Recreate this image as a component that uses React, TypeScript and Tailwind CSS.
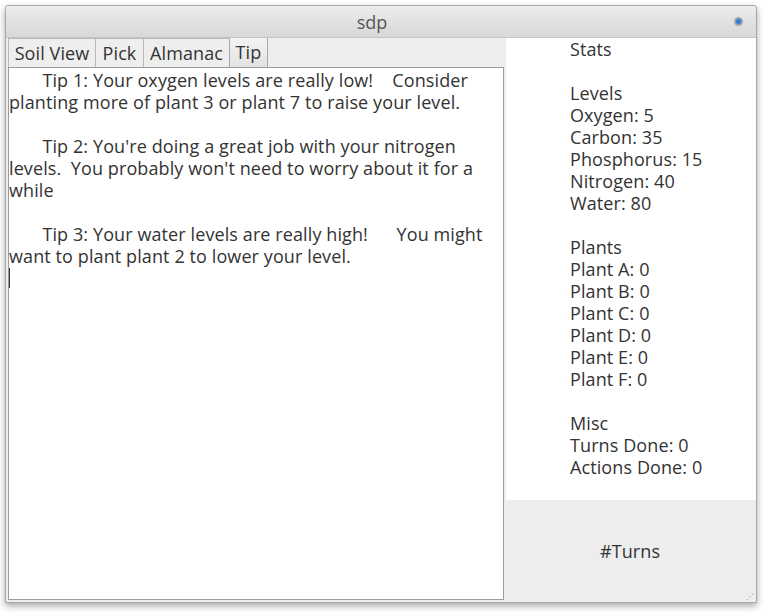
import React from "react";

const FONT = "font-['Open_Sans','Liberation_Sans',sans-serif]";

const tipLines: string[] = [
  "\u00a0\u00a0\u00a0\u00a0\u00a0\u00a0\u00a0Tip 1: Your oxygen levels are really low!\u00a0\u00a0\u00a0\u00a0Consider",
  "planting more of plant 3 or plant 7 to raise your level.",
  "",
  "\u00a0\u00a0\u00a0\u00a0\u00a0\u00a0\u00a0Tip 2: You're doing a great job with your nitrogen",
  "levels.\u00a0\u00a0You probably won't need to worry about it for a",
  "while",
  "",
  "\u00a0\u00a0\u00a0\u00a0\u00a0\u00a0\u00a0Tip 3: Your water levels are really high!\u00a0\u00a0\u00a0\u00a0\u00a0\u00a0You might",
  "want to plant plant 2 to lower your level.",
];

const stats: string[] = [
  "Stats",
  "",
  "Levels",
  "Oxygen: 5",
  "Carbon: 35",
  "Phosphorus: 15",
  "Nitrogen: 40",
  "Water: 80",
  "",
  "Plants",
  "Plant A: 0",
  "Plant B: 0",
  "Plant C: 0",
  "Plant D: 0",
  "Plant E: 0",
  "Plant F: 0",
  "",
  "Misc",
  "Turns Done: 0",
  "Actions Done: 0",
];

const tabs = [
  { label: "Soil View", w: "w-[88px]" },
  { label: "Pick", w: "w-[49px]" },
  { label: "Almanac", w: "w-[87px]" },
  { label: "Tip", w: "w-[39px]" },
];

export default function App() {
  return (
    <div className={`w-[766px] h-[613px] bg-white pt-[5px] pl-[5px] ${FONT}`}>
      <div className="w-[752px] h-[598px] flex flex-col border border-[#a8a8a8] rounded-t-[3px] shadow-[0_3px_7px_rgba(0,0,0,0.35)] bg-[#ededed]">
        {/* title bar */}
        <div className="h-[32px] shrink-0 flex items-center justify-center relative bg-gradient-to-b from-[#ececec] to-[#d8d8d8] border-b border-[#c4c4c4] rounded-t-[3px] pr-[18px]">
          <span className="text-[18px] text-[#555] leading-none">sdp</span>
          <span className="absolute right-[13px] top-[11px] w-[9px] h-[9px] rounded-full bg-[#2f7fd6] border-2 border-[#9aa6b4]" />
        </div>

        <div className="flex flex-1 min-h-0 text-[18px] tracking-[0.1px] text-[#333]">
          {/* left: tabs + text */}
          <div className="flex flex-col w-[498px] pl-[2px]">
            <div className="flex h-[29px] items-end">
              {tabs.map((t) => (
                <div
                  key={t.label}
                  className={
                    t.label === "Tip"
                      ? `${t.w} h-[31px] flex items-center justify-center border border-b-0 border-[#a8a8a8] rounded-t-[2px] bg-gradient-to-b from-[#f4f4f4] to-[#e2e2e2] -ml-px`
                      : `${t.w} h-[29px] flex items-center justify-center border border-b-0 border-[#b8b8b8] bg-[#eeeeee] -ml-px first:ml-0`
                  }
                >
                  {t.label}
                </div>
              ))}
            </div>
            <div className="flex-1 mb-[2px] bg-white border border-[#9c9c9c] pt-[1px] leading-[22px] whitespace-pre">
              {tipLines.map((l, i) => (
                <div key={i} className="h-[22px]">
                  {l}
                </div>
              ))}
              <div className="h-[22px] flex items-center">
                <span className="w-px h-[20px] bg-[#333]" />
              </div>
            </div>
          </div>

          {/* right: stats */}
          <div className="flex flex-col flex-1 ml-[2px]">
            <div className="h-[462px] bg-white pl-[64px] leading-[22px]">
              {stats.map((s, i) => (
                <div key={i} className="h-[22px]">
                  {s}
                </div>
              ))}
            </div>
            <div className="flex-1 flex items-center justify-center relative">
              <span className="-ml-[2px]">#Turns</span>
              <span className="absolute right-[2px] bottom-[2px] text-[8px] leading-none text-[#999]">⋰</span>
            </div>
          </div>
        </div>
      </div>
    </div>
  );
}
